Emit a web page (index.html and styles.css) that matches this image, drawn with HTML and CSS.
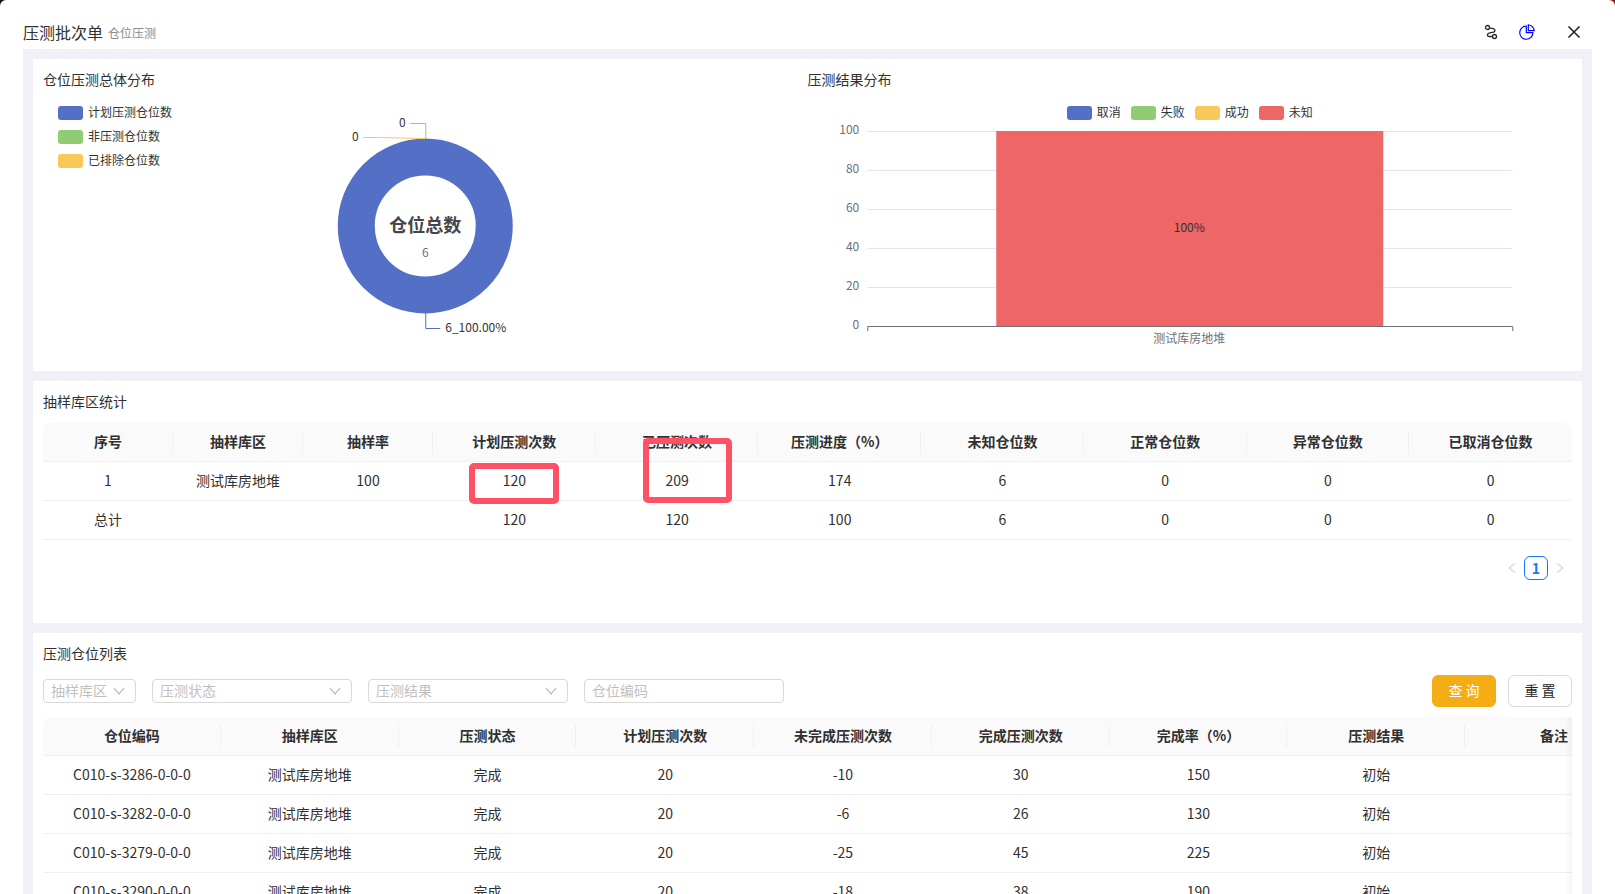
FILE: index.html
```html
<!DOCTYPE html>
<html lang="zh-CN">

<head>
    <meta charset="UTF-8">
    <meta name="viewport" content="width=device-width, initial-scale=1.0">
    <title>压测批次单</title>

    <link rel="stylesheet" href="styles.css">
</head>

<body>

    <div class="modal">
        <!-- Header -->
        <header class="modal-header">
            <h1>压测批次单</h1>
            <span class="sub-title">仓位压测</span>
            <div class="header-actions">
                <button class="icon-btn" aria-label="流程">
                    <svg width="14" height="16" viewBox="0 0 14 16" fill="none" stroke="currentColor" stroke-width="1.3">
                        <circle cx="3.5" cy="3.5" r="2" />
                        <circle cx="10.5" cy="12.5" r="2" />
                        <path d="M5.5 4.2C8 4 11 4.500 11 6.500C11 8.500 8.500 8.500 6 8.800C3 9.200 2.500 12.300 5 12.500H8.500" />
                    </svg>
                </button>
                <button class="icon-btn active" aria-label="统计">
                    <svg width="16" height="16" viewBox="64 64 896 896" fill="currentColor">
                        <path d="M864 518H506V160c0-4.400-3.600-8-8-8h-26a398.460 398.460 0 0 0-282.800 117.100 398.190 398.190 0 0 0-85.700 127.100A397.610 397.610 0 0 0 72 552a398.460 398.460 0 0 0 117.100 282.800c36.700 36.700 79.500 65.600 127.100 85.700A397.610 397.610 0 0 0 472 952a398.460 398.460 0 0 0 282.800-117.100c36.700-36.700 65.600-79.500 85.700-127.100A397.610 397.610 0 0 0 872 552v-26c0-4.400-3.600-8-8-8zM705.700 787.800A331.590 331.590 0 0 1 470.400 884c-88.100-.4-170.900-34.900-233.200-97.200C174.500 724.100 140 640.700 140 552c0-88.700 34.500-172.100 97.200-234.800 54.600-54.600 124.900-87.900 200.800-95.500V586h364.300c-7.700 76.300-41.300 147-96.600 201.800zM952 462.400l-2.600-28.200c-8.500-92.100-49.400-179-115.200-244.600A399.400 399.400 0 0 0 589 74.600L560.700 72c-4.700-.4-8.700 3.200-8.700 7.900V464c0 4.400 3.600 8 8 8l384-1c4.700 0 8.400-4 8-8.600zm-332.200-58.200V147.600a332.240 332.240 0 0 1 166.400 89.800c45.700 45.600 77 103.600 90 166.100l-256.400.7z" />
                    </svg>
                </button>
                <button class="icon-btn close" aria-label="关闭">
                    <svg width="14" height="14" viewBox="0 0 14 14" fill="none" stroke="currentColor" stroke-width="1.6">
                        <path d="M1.500 1.500l11 11M12.500 1.500l-11 11" />
                    </svg>
                </button>
            </div>
        </header>

        <main class="modal-body">

            <!-- Charts -->
            <section class="card charts">
                <div class="chart">
                    <h2>仓位压测总体分布</h2>
                    <div class="chart-area">
                        <ul class="legend">
                            <li><i class="swatch blue"></i>计划压测仓位数</li>
                            <li><i class="swatch green"></i>非压测仓位数</li>
                            <li><i class="swatch yellow"></i>已排除仓位数</li>
                        </ul>
                        <svg class="plot" viewBox="0 0 764 270">
                            <circle cx="382" cy="135" r="69" fill="none" stroke="#5470c6" stroke-width="37" />
                            <path d="M367 32.500H382.500V47" fill="none" stroke="#91cc75" />
                            <path d="M320 46.500H335L382 47.500" fill="none" stroke="#fac858" />
                            <path d="M382.500 222V237.500H397" fill="none" stroke="#5470c6" />
                            <text class="label" x="359" y="36" text-anchor="middle">0</text>
                            <text class="label" x="312" y="50" text-anchor="middle">0</text>
                            <text class="label" x="402" y="241">6_100.00%</text>
                            <text class="total" x="382" y="141" text-anchor="middle">仓位总数</text>
                            <text class="axis" x="382" y="166" text-anchor="middle">6</text>
                        </svg>
                    </div>
                </div>

                <div class="chart">
                    <h2>压测结果分布</h2>
                    <div class="chart-area">
                        <ul class="legend legend-row">
                            <li><i class="swatch blue"></i>取消</li>
                            <li><i class="swatch green"></i>失败</li>
                            <li><i class="swatch yellow"></i>成功</li>
                            <li><i class="swatch red"></i>未知</li>
                        </ul>
                        <svg class="plot" viewBox="0 0 764 270">
                            <path d="M59 40.500H704M59 79.500H704M59 118.500H704M59 157.500H704M59 196.500H704" stroke="#e0e6f1" />
                            <rect x="188" y="40" width="387" height="195" fill="#ee6666" />
                            <path d="M59.500 240V235.500H704.500V240" fill="none" stroke="#6e7079" />
                            <g class="axis" text-anchor="end">
                                <text x="51" y="43">100</text>
                                <text x="51" y="82">80</text>
                                <text x="51" y="121">60</text>
                                <text x="51" y="160">40</text>
                                <text x="51" y="199">20</text>
                                <text x="51" y="238">0</text>
                            </g>
                            <text class="axis" x="381" y="252" text-anchor="middle">测试库房地堆</text>
                            <text class="label" x="381" y="141" text-anchor="middle">100%</text>
                        </svg>
                    </div>
                </div>
            </section>

            <!-- Area statistics -->
            <section class="card area-stats">
                <h2>抽样库区统计</h2>
                <table class="table stats-table">
                    <colgroup>
                        <col class="narrow"><col class="narrow"><col class="narrow">
                        <col><col><col><col><col><col><col>
                    </colgroup>
                    <thead>
                        <tr>
                            <th>序号</th>
                            <th>抽样库区</th>
                            <th>抽样率</th>
                            <th>计划压测次数</th>
                            <th>已压测次数</th>
                            <th>压测进度（%）</th>
                            <th>未知仓位数</th>
                            <th>正常仓位数</th>
                            <th>异常仓位数</th>
                            <th>已取消仓位数</th>
                        </tr>
                    </thead>
                    <tbody>
                        <tr>
                            <td>1</td>
                            <td>测试库房地堆</td>
                            <td>100</td>
                            <td>120<span class="mark mark-plan"></span></td>
                            <td>209<span class="mark mark-done"></span></td>
                            <td>174</td>
                            <td>6</td>
                            <td>0</td>
                            <td>0</td>
                            <td>0</td>
                        </tr>
                        <tr>
                            <td>总计</td>
                            <td></td>
                            <td></td>
                            <td>120</td>
                            <td>120</td>
                            <td>100</td>
                            <td>6</td>
                            <td>0</td>
                            <td>0</td>
                            <td>0</td>
                        </tr>
                    </tbody>
                </table>
                <nav class="pagination" aria-label="分页">
                    <button class="page-arrow" aria-label="上一页" disabled>
                        <svg width="8" height="12" viewBox="0 0 8 12" fill="none" stroke="currentColor"><path d="M7 1.500L1 6l6 4.500" /></svg>
                    </button>
                    <button class="page-item">1</button>
                    <button class="page-arrow" aria-label="下一页" disabled>
                        <svg width="8" height="12" viewBox="0 0 8 12" fill="none" stroke="currentColor"><path d="M1 1.500L7 6l-6 4.500" /></svg>
                    </button>
                </nav>
            </section>

            <!-- Bin list -->
            <section class="card">
                <h2>压测仓位列表</h2>
                <form class="filters">
                    <div class="select small">
                        <select aria-label="抽样库区"><option>抽样库区</option></select>
                        <svg width="12" height="8" viewBox="0 0 12 8" fill="none" stroke="currentColor" stroke-width="1.200"><path d="M1 1l5 6 5-6" /></svg>
                    </div>
                    <div class="select">
                        <select aria-label="压测状态"><option>压测状态</option></select>
                        <svg width="12" height="8" viewBox="0 0 12 8" fill="none" stroke="currentColor" stroke-width="1.200"><path d="M1 1l5 6 5-6" /></svg>
                    </div>
                    <div class="select">
                        <select aria-label="压测结果"><option>压测结果</option></select>
                        <svg width="12" height="8" viewBox="0 0 12 8" fill="none" stroke="currentColor" stroke-width="1.200"><path d="M1 1l5 6 5-6" /></svg>
                    </div>
                    <input class="input" type="text" placeholder="仓位编码" aria-label="仓位编码">
                    <div class="filter-actions">
                        <button class="btn primary" type="button">查 询</button>
                        <button class="btn" type="reset">重 置</button>
                    </div>
                </form>
                <div class="table-scroll">
                    <table class="table list-table">
                        <thead>
                            <tr>
                                <th>仓位编码</th>
                                <th>抽样库区</th>
                                <th>压测状态</th>
                                <th>计划压测次数</th>
                                <th>未完成压测次数</th>
                                <th>完成压测次数</th>
                                <th>完成率（%）</th>
                                <th>压测结果</th>
                                <th>备注</th>
                            </tr>
                        </thead>
                        <tbody>
                            <tr>
                                <td>C010-s-3286-0-0-0</td>
                                <td>测试库房地堆</td>
                                <td>完成</td>
                                <td>20</td>
                                <td>-10</td>
                                <td>30</td>
                                <td>150</td>
                                <td>初始</td>
                                <td></td>
                            </tr>
                            <tr>
                                <td>C010-s-3282-0-0-0</td>
                                <td>测试库房地堆</td>
                                <td>完成</td>
                                <td>20</td>
                                <td>-6</td>
                                <td>26</td>
                                <td>130</td>
                                <td>初始</td>
                                <td></td>
                            </tr>
                            <tr>
                                <td>C010-s-3279-0-0-0</td>
                                <td>测试库房地堆</td>
                                <td>完成</td>
                                <td>20</td>
                                <td>-25</td>
                                <td>45</td>
                                <td>225</td>
                                <td>初始</td>
                                <td></td>
                            </tr>
                            <tr>
                                <td>C010-s-3290-0-0-0</td>
                                <td>测试库房地堆</td>
                                <td>完成</td>
                                <td>20</td>
                                <td>-18</td>
                                <td>38</td>
                                <td>190</td>
                                <td>初始</td>
                                <td></td>
                            </tr>
                        </tbody>
                    </table>
                </div>
            </section>

        </main>
    </div>

</body>

</html>
```
FILE: styles.css
```css
/* General Styling */
* {
    box-sizing: border-box;
}

body {
    margin: 0;
    height: 100vh;
    overflow: hidden;
    font-family: "Noto Sans CJK SC", sans-serif;
    font-size: 14px;
    line-height: 22px;
    color: #303030;
    background: linear-gradient(90deg, #111111, #8b1a1a);
}

button,
input,
select {
    font-family: inherit;
    font-size: 14px;
}

h2 {
    margin: 0;
    padding-bottom: 2px;
    font-size: 14px;
    font-weight: 400;
    line-height: 20px;
}

/* Modal */
.modal {
    height: 100vh;
    overflow: hidden;
    padding: 14px 23px 0;
    background-color: #ffffff;
    border-radius: 6px 6px 0 0;
}

.modal-header {
    display: flex;
    align-items: center;
    height: 35px;
}

.modal-header h1 {
    margin: 0;
    font-size: 16px;
    font-weight: 400;
}

.sub-title {
    margin-left: 5px;
    padding-top: 2px;
    font-size: 12px;
    color: #8c8c8c;
}

.header-actions {
    display: flex;
    gap: 20px;
    margin-left: auto;
    padding-right: 10px;
}

.icon-btn {
    display: flex;
    align-items: center;
    justify-content: center;
    width: 16px;
    height: 30px;
    padding: 0;
    border: none;
    background: none;
    color: #262626;
    cursor: pointer;
}

.icon-btn.active {
    color: #0000ff;
}

.icon-btn.close {
    margin-left: 11px;
}

/* Body */
.modal-body {
    display: flex;
    flex-direction: column;
    gap: 10px;
    padding: 10px;
    background-color: #f0f1f6;
}

.card {
    padding: 10px;
    background-color: #ffffff;
}

/* Charts */
.charts {
    display: grid;
    grid-template-columns: 1fr 1fr;
}

.chart-area {
    display: grid;
}

.plot,
.legend {
    grid-area: 1 / 1;
}

.plot {
    width: 100%;
    height: 270px;
}

.legend {
    display: flex;
    flex-direction: column;
    gap: 10px;
    margin: 0;
    padding: 15px 15px 0;
    list-style: none;
    font-size: 12px;
    line-height: 12px;
    color: #333333;
}

.legend-row {
    flex-direction: row;
    justify-content: center;
}

.legend li {
    display: flex;
    gap: 5px;
}

.swatch {
    width: 25px;
    height: 14px;
    border-radius: 3px;
}

.blue {
    background-color: #5470c6;
}

.green {
    background-color: #91cc75;
}

.yellow {
    background-color: #fac858;
}

.red {
    background-color: #ee6666;
}

.label {
    font-size: 12px;
    fill: #333333;
}

.axis {
    font-size: 12px;
    fill: #6e7079;
}

.total {
    font-size: 18px;
    font-weight: 700;
    fill: #464646;
}

/* Tables */
.table {
    width: 100%;
    table-layout: fixed;
    border-collapse: separate;
    border-spacing: 0;
    text-align: center;
}

.table th,
.table td {
    position: relative;
    height: 39px;
    padding: 7px 0 9px;
    border-bottom: 1px solid #f0f0f0;
    white-space: nowrap;
}

.table th {
    font-weight: 600;
    background-color: #fafafa;
}

.table th:first-child {
    border-top-left-radius: 8px;
}

.table th:not(:last-child)::after {
    content: "";
    position: absolute;
    top: 8px;
    right: 0;
    width: 1px;
    height: 23px;
    background-color: #f0f0f0;
}

.area-stats {
    min-height: 242px;
}

.stats-table,
.table-scroll {
    margin-top: 10px;
}

.stats-table th:last-child {
    border-top-right-radius: 8px;
}

.stats-table .narrow {
    width: 130px;
}

/* Red marks over the cells */
.mark {
    position: absolute;
    border: 6px solid #ff5166;
    border-radius: 5px;
}

.mark-plan {
    top: 1px;
    left: 36px;
    width: 90px;
    height: 41px;
}

.mark-done {
    top: -24px;
    left: 47px;
    width: 89px;
    height: 65px;
    z-index: 1;
}

/* Pagination */
.pagination {
    display: flex;
    justify-content: flex-end;
    margin-top: 16px;
}

.pagination button {
    display: flex;
    align-items: center;
    justify-content: center;
    width: 24px;
    height: 24px;
    padding: 0;
    border: none;
    background: none;
}

.pagination .page-item {
    border: 1px solid #1677ff;
    border-radius: 6px;
    font-weight: 600;
    color: #1677ff;
}

.pagination .page-arrow {
    color: #bfbfbf;
}

/* Filters */
.filters {
    display: flex;
    align-items: center;
    gap: 16px;
    margin-top: 10px;
}

.select {
    position: relative;
    width: 200px;
    height: 24px;
    color: #bfbfbf;
}

.select.small {
    width: 93px;
}

.select select,
.input {
    display: block;
    width: 100%;
    height: 24px;
    padding: 0 7px 2px;
    border: 1px solid #d9d9d9;
    border-radius: 4px;
    background-color: #ffffff;
    color: inherit;
    appearance: none;
}

.select svg {
    position: absolute;
    top: 8px;
    right: 11px;
    pointer-events: none;
}

.input {
    width: 200px;
    color: #262626;
}

.input::placeholder {
    color: #bfbfbf;
}

.filter-actions {
    display: flex;
    gap: 12px;
    margin-left: auto;
}

.btn {
    width: 64px;
    height: 32px;
    padding: 0 0 2px;
    border: 1px solid #d9d9d9;
    border-radius: 6px;
    background-color: #ffffff;
    color: #262626;
    cursor: pointer;
}

.btn.primary {
    border-color: #f5ad16;
    background-color: #f5ad16;
    color: #ffffff;
}

/* Bin list */
.table-scroll {
    position: relative;
    overflow: hidden;
}

.table-scroll::after {
    content: "";
    position: absolute;
    top: 0;
    right: 0;
    bottom: 0;
    width: 30px;
    box-shadow: inset -10px 0 8px -8px rgba(5, 5, 5, 0.06);
    pointer-events: none;
}

.list-table {
    width: 1600px;
    min-width: 100%;
}
```
